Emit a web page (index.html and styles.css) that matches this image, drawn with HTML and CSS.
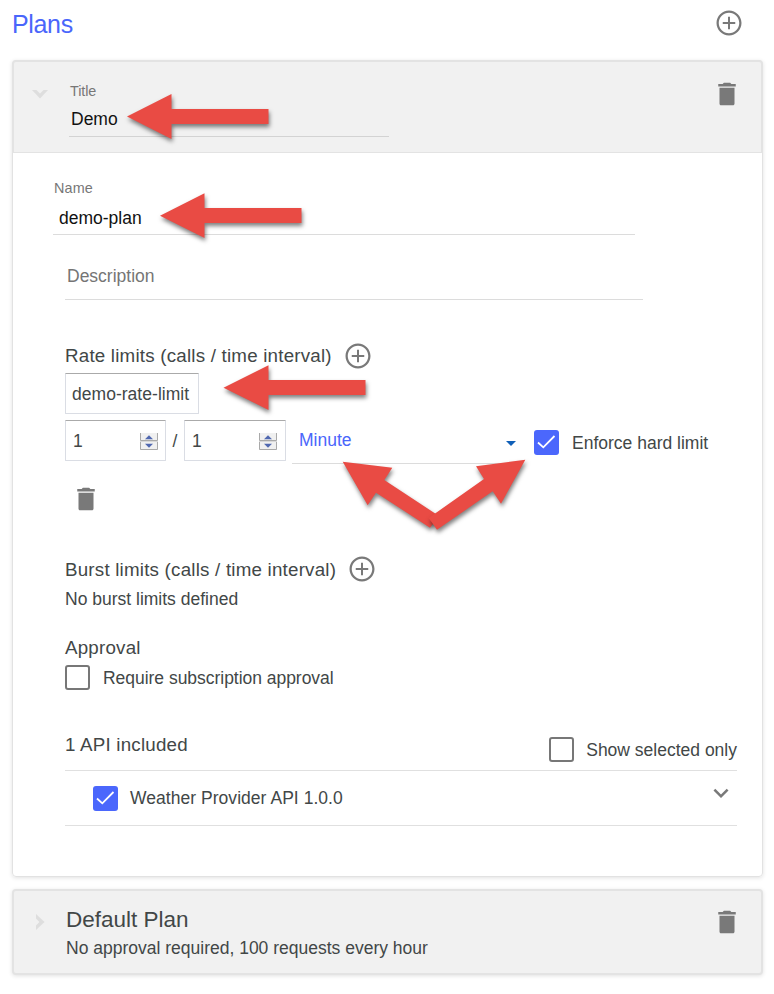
FILE: index.html
```html
<!DOCTYPE html>
<html lang="en">
<head>
<meta charset="utf-8">
<title>Plans</title>
<link rel="stylesheet" href="styles.css">
</head>
<body>
<svg class="defs" aria-hidden="true">
  <symbol id="add" viewBox="0 0 24 24"><path d="M12.800 7h-1.600v4.200H7v1.600h4.200V17h1.600v-4.200H17v-1.600h-4.200V7zM12 2C6.490 2 2 6.490 2 12s4.490 10 10 10 10-4.490 10-10S17.510 2 12 2zm0 18.200c-4.500 0-8.200-3.700-8.200-8.200S7.500 3.800 12 3.800s8.200 3.700 8.200 8.200-3.700 8.200-8.200 8.200z"/></symbol>
  <symbol id="trash" viewBox="0 0 24 24"><path d="M6 19.800c0 .7.5 1.200 1.200 1.200h9.600c.7 0 1.200-.5 1.200-1.200V7H6v12.800zM19 4h-3.500l-1-1h-5l-1 1H5v2h14V4z"/></symbol>
  <symbol id="down" viewBox="0 0 24 24"><path d="M16.590 8.590 12 13.170 7.410 8.590 6 10l6 6 6-6z"/></symbol>
  <symbol id="check" viewBox="0 0 25 25"><path d="M4 12.500 9.300 17.300 20.500 6" fill="none" stroke="#fff" stroke-width="1.800"/></symbol>
  <symbol id="spin" viewBox="0 0 18 17">
    <path d="M0 0h18v17H0z" fill="#f0f0f0"/>
    <path d="M.5 0v7.500h17V0M.5 9v7.500h17V9" fill="none" stroke="#a9a9a9"/>
    <path d="M0 8h18v1H0z" fill="#d8d8d8"/>
    <path d="M5 6.300 9 2.300l4 4zM5 10.700l4 4 4-4z" fill="#5068b0"/>
  </symbol>
</svg>
<main class="page">
  <header class="page-head">
    <h1>Plans</h1>
    <svg class="icon"><use href="#add"/></svg>
  </header>

  <section class="card">
    <div class="card-head">
      <svg class="toggle" viewBox="0 0 16 9"><path d="M0 0h4.500L8 3.400 11.500 0H16L8 8.500z"/></svg>
      <div class="title-field">
        <label class="small">Title</label>
        <div class="value demo">Demo</div>
      </div>
      <svg class="icon"><use href="#trash"/></svg>
    </div>

    <div class="card-body">
      <div class="name-field">
        <label class="small">Name</label>
        <div class="value">demo-plan</div>
      </div>
      <div class="description">Description</div>

      <div class="heading rate"><h2>Rate limits (calls / time interval)</h2><svg class="icon"><use href="#add"/></svg></div>
      <div class="box rate-name">demo-rate-limit</div>
      <div class="limit-row">
        <div class="box number"><span>1</span><svg class="spinner"><use href="#spin"/></svg></div>
        <span class="slash">/</span>
        <div class="box number"><span>1</span><svg class="spinner"><use href="#spin"/></svg></div>
        <div class="select"><span>Minute</span><i class="caret"></i></div>
        <span class="checkbox on"><svg><use href="#check"/></svg></span>
        <span class="enforce">Enforce hard limit</span>
      </div>
      <svg class="icon remove"><use href="#trash"/></svg>

      <div class="heading burst"><h2>Burst limits (calls / time interval)</h2><svg class="icon"><use href="#add"/></svg></div>
      <p class="none">No burst limits defined</p>

      <h2 class="approval">Approval</h2>
      <div class="option"><span class="checkbox"></span><span class="require">Require subscription approval</span></div>

      <div class="apis-head">
        <h2>1 API included</h2>
        <div class="option"><span class="checkbox"></span><span class="selected">Show selected only</span></div>
      </div>
      <div class="api-row">
        <span class="checkbox on"><svg><use href="#check"/></svg></span>
        <span class="weather">Weather Provider API 1.0.0</span>
        <svg class="icon"><use href="#down"/></svg>
      </div>
    </div>
  </section>

  <section class="card closed">
    <svg class="toggle" viewBox="0 0 9 16"><path d="M0 0v4.500L3.400 8 0 11.500V16L8.500 8z"/></svg>
    <div class="summary">
      <h3>Default Plan</h3>
      <p>No approval required, 100 requests every hour</p>
    </div>
    <svg class="icon"><use href="#trash"/></svg>
  </section>

  <svg class="arrows" viewBox="0 0 774 994">
    <path d="M127 116.500 171.500 94v15h97v15h-97v15z"/>
    <path d="M160 215.800 204.500 193.300v14.700H301.500v15H204.500v15z"/>
    <path d="M223.500 387.700 268.500 365.300V380h97v15h-97v15z"/>
    <path d="M342.700 461.700 392.300 467.700 384.300 480 439 516 430 527.700 376 492.700 367.700 505.300z"/>
    <path d="M525.300 459.700 476 466.300 484 479 428.700 518 437 529.700 492.700 491.300 501 503.700z"/>
  </svg>
</main>
</body>
</html>
```
FILE: styles.css
```css
* { box-sizing: border-box; }
body {
  margin: 0;
  background: #fff;
  color: #424747;
  font: 17.5px/24px "Liberation Sans", Arial, sans-serif;
  white-space: nowrap;
}
h1, h2, h3, p { margin: 0; font-weight: 400; }
svg { display: block; flex: none; }
.defs { position: absolute; width: 0; height: 0; }
.page { position: relative; width: 774px; height: 994px; padding: 0 11px 0 12px; overflow: hidden; }
.icon { width: 30px; height: 30px; fill: #797979; }

.page-head { display: flex; justify-content: space-between; height: 60px; padding: 8px 19px 0 0; }
h1 { font-size: 25px; line-height: 33px; letter-spacing: -.35px; color: #4a66fb; }

.card { border: 1px solid #e2e2e2; border-radius: 4px; box-shadow: 0 1px 4px rgba(0, 0, 0, .12); height: 817px; }
.card-head {
  display: flex;
  height: 93px;
  margin: -1px -1px 0;
  padding: 19px 19px 0 18px;
  background: #f1f1f1;
  border: 2px solid #e3e3e3;
  border-bottom-width: 1px;
  border-radius: 4px 4px 0 0;
}
.card-head .icon { margin: -2px 0 0 auto; }
.card-head .toggle { width: 16px; height: 9px; margin-top: 9px; }
.toggle { fill: #dedede; }
.small { display: block; font-size: 14.4px; line-height: 22px; color: #777; }
.value { color: #111; }
.title-field { width: 320px; height: 56px; margin-left: 21px; border-bottom: 1px solid #d3d3d3; }
.title-field .small { margin-left: 1px; line-height: 20px; letter-spacing: -.1px; }
.demo { padding-left: 2px; margin-top: 6px; }

.card-body { padding: 24px 25px 0 52px; }
.name-field { width: 582px; margin-left: -12px; }
.name-field .small { padding-left: 1px; letter-spacing: .15px; }
.name-field .value { height: 36px; padding: 7px 0 0 6px; border-bottom: 1px solid #dcdcdc; }
.description { width: 578px; height: 65px; padding: 29px 0 0 2px; border-bottom: 1px solid #dcdcdc; color: #757575; }

h2 { font-size: 18.75px; line-height: 24px; letter-spacing: .21px; }
.heading { display: flex; align-items: center; height: 30px; }
.heading .icon { margin-left: 9.5px; }
.rate { margin-top: 41px; }
.rate h2 { width: 268px; }
.burst h2 { width: 272px; padding-top: 1px; }
.box { height: 41px; border: 1px solid #dadde4; border-top-color: #aaa; border-radius: 1px; padding: 8px 6px; }
.rate-name { width: 134px; margin-top: 2px; letter-spacing: .03px; }
.limit-row { display: flex; margin-top: 6px; }
.number { display: flex; width: 101px; padding-left: 7px; }
.spinner { width: 18px; height: 17px; margin: 4px 1px 0 auto; }
.slash { width: 18px; text-align: center; line-height: 42px; }
.slash + .number { width: 102px; }
.slash + .number .spinner { margin-right: 2px; }
.select { display: flex; justify-content: space-between; width: 231px; height: 44px; margin-left: 6px; padding: 8px 7px 0 7px; border-bottom: 1px solid #dcdcdc; color: #4a66fb; }
.caret { width: 0; height: 0; margin-top: 13px; border: 5.5px solid transparent; border-top-color: #1060b8; border-bottom: 0; }
.limit-row .checkbox { margin: 10px 0 0 11px; }
.checkbox { display: block; flex: none; width: 25px; height: 25px; border: 2px solid #777; border-radius: 3px; background: #fff; }
.checkbox.on { border: 0; background: #4b67fc; }
.checkbox.on svg { width: 25px; height: 25px; }
.enforce { margin: 11px 0 0 13px; }
.remove { margin: 20px 0 0 6px; }
.burst { margin-top: 40px; }
.none { margin-top: 3px; }
.approval { margin-top: 25px; }
.option { display: flex; align-items: center; gap: 13px; }
.card-body > .option { margin-top: 5px; }
.require { letter-spacing: -.03px; }
.apis-head { display: flex; justify-content: space-between; height: 81px; border-bottom: 1px solid #e0e0e0; }
.apis-head h2 { margin-top: 43px; }
.apis-head .option { height: 25px; margin-top: 47px; gap: 12px; }
.api-row { display: flex; align-items: center; height: 55px; padding-left: 28px; border-bottom: 1px solid #e0e0e0; }
.weather { margin-left: 12px; letter-spacing: .04px; }
.api-row .icon { margin: -11px 1px 0 auto; }

.closed { display: flex; height: 86px; margin-top: 12px; padding: 16px 19px 0 22px; background: #f1f1f1; border: 2px solid #e3e3e3; }
.closed .toggle { width: 9px; height: 16px; margin-top: 7px; }
.summary { margin-left: 21px; }
h3 { font-size: 22.5px; line-height: 26px; }
.summary p { margin-top: 3px; }
.closed .icon { margin: 0 0 0 auto; }

.arrows { position: absolute; inset: 0; width: 774px; height: 994px; fill: #e94b44; pointer-events: none; }
.arrows path { filter: drop-shadow(1px 3px 2px rgba(0, 0, 0, .5)); }
```
